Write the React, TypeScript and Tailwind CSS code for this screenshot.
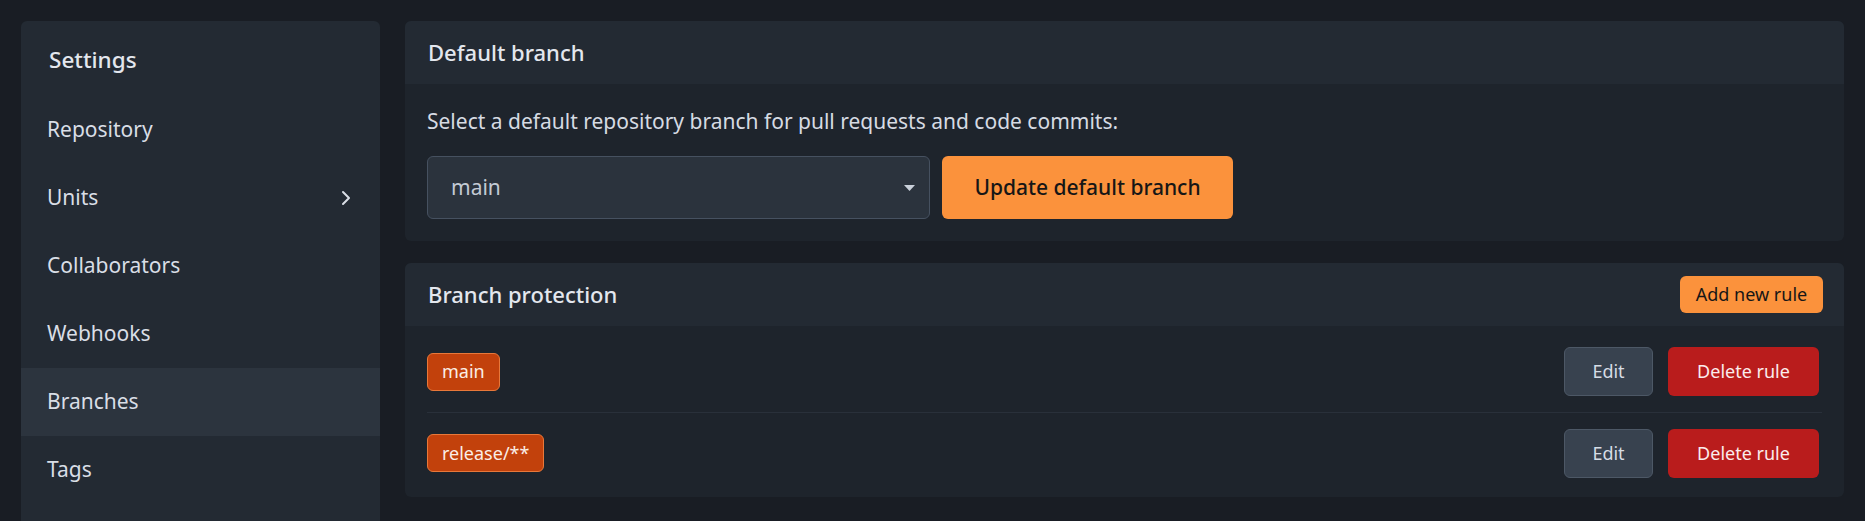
import { ChevronRight } from 'lucide-react';

interface NavItem {
  label: string;
  active?: boolean;
  expandable?: boolean;
}

const navItems: NavItem[] = [
  { label: 'Repository' },
  { label: 'Units', expandable: true },
  { label: 'Collaborators' },
  { label: 'Webhooks' },
  { label: 'Branches', active: true },
  { label: 'Tags' },
];

const rules = ['main', 'release/**'];

function Sidebar() {
  return (
    <aside className="w-[359px] shrink-0 self-start rounded-md bg-[#232a33] pb-[40px]">
      <div className="flex h-[75px] items-center pl-[28px] pt-[2px] text-[22.5px] font-medium text-[#e3e7ee]">
        Settings
      </div>
      <nav className="flex flex-col">
        {navItems.map((item) => (
          <div
            key={item.label}
            className={`flex h-[68px] items-center justify-between pl-[26px] pr-[22px] text-[21px] text-[#d9dee6] ${
              item.active ? 'bg-[#2c343e]' : ''
            }`}
          >
            <span>{item.label}</span>
            {item.expandable && <ChevronRight size={24} strokeWidth={2} className="text-[#d9dee6]" />}
          </div>
        ))}
      </nav>
    </aside>
  );
}

function Panel({ title, action, children }: { title: string; action?: React.ReactNode; children: React.ReactNode }) {
  return (
    <section className="overflow-hidden rounded-md bg-[#1e242c]">
      <div className="flex h-[63px] items-center justify-between bg-[#232a33] pl-[23px] pr-[21px]">
        <h2 className="text-[22px] font-medium text-[#e3e7ee]">{title}</h2>
        {action}
      </div>
      {children}
    </section>
  );
}

export default function App() {
  return (
    <div className="flex min-h-screen gap-[25px] bg-[#191d24] p-[21px] font-['Noto_Sans',sans-serif]">
      <Sidebar />
      <main className="flex flex-1 flex-col gap-[22px]">
        {/* Default branch */}
        <Panel title="Default branch">
          <div className="px-[22px] pb-[22px] pt-[21px]">
            <p className="text-[21px] leading-[32px] text-[#d6dbe3]">
              Select a default repository branch for pull requests and code commits:
            </p>
            <div className="mt-[19px] flex gap-[12px]">
              <div className="flex h-[63px] w-[503px] items-center justify-between rounded-md border border-[#465160] bg-[#2b333d] pl-[23px] pr-[14px]">
                <span className="text-[21px] text-[#c3cad4]">main</span>
                <svg width="11" height="6" viewBox="0 0 11 6">
                  <path d="M0 0h11L5.5 6z" fill="#c9d0da" />
                </svg>
              </div>
              <button className="h-[63px] w-[291px] rounded-md bg-[#fb923c] text-[21px] font-medium text-[#161616]">
                Update default branch
              </button>
            </div>
          </div>
        </Panel>

        {/* Branch protection */}
        <Panel
          title="Branch protection"
          action={
            <button className="h-[37px] w-[143px] rounded-md bg-[#fb923c] text-[18px] text-[#161616]">
              Add new rule
            </button>
          }
        >
          <div className="px-[22px] pb-[4px] pt-[5px]">
            {rules.map((rule, i) => (
              <div
                key={rule}
                className={`flex h-[81px] items-center justify-between ${i > 0 ? 'border-t border-[#29303a]' : ''}`}
              >
                <span className="flex h-[38px] items-center rounded-md border border-[#e8783a] bg-[#c2410c] px-[14px] text-[18px] text-[#fbeee6]">
                  {rule}
                </span>
                <div className="mr-[3px] flex gap-[15px]">
                  <button className="h-[49px] w-[89px] rounded-md border border-[#4d5866] bg-[#38424f] text-[18px] text-[#d6dce5]">
                    Edit
                  </button>
                  <button className="h-[49px] w-[151px] rounded-md bg-[#b91c1c] text-[18px] text-[#fbecec]">
                    Delete rule
                  </button>
                </div>
              </div>
            ))}
          </div>
        </Panel>
      </main>
    </div>
  );
}
